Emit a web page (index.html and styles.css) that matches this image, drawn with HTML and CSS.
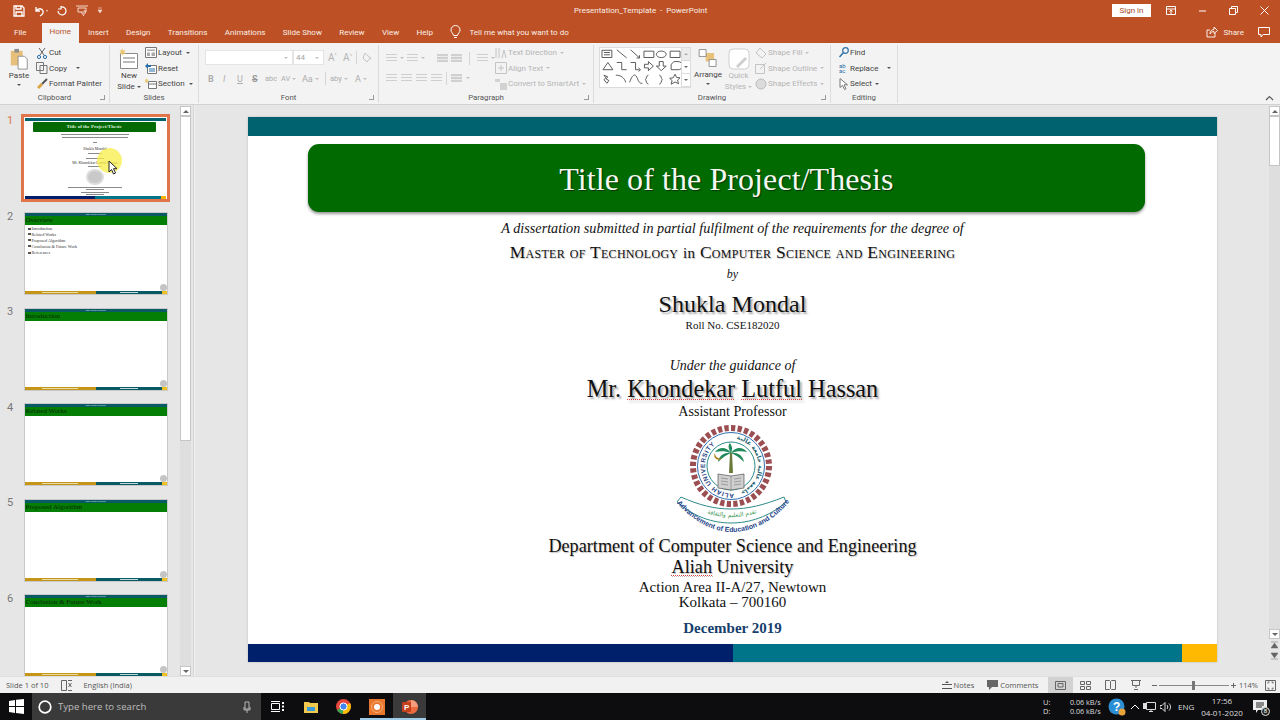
FILE: index.html
```html
<!DOCTYPE html>
<html lang="en">
<head>
  <meta charset="UTF-8">
  <title>Presentation_Template - PowerPoint</title>
  <link rel="stylesheet" href="styles.css">
</head>
<body>
  <div class="app">
    <!-- title bar -->
    <header class="titlebar">
      <div class="qat">
        <svg width="12" height="12" viewBox="0 0 12 12"><path d="M1 1h8l2 2v8H1z M3 1v3h5V1 M3 11V7h6v4" fill="none" stroke="#fff" stroke-width="1.3"/></svg>
        <svg width="14" height="12" viewBox="0 0 14 12"><path d="M2 2v4h4 M2 6c2-3 6-3 7 0 .5 2-1 4-3 5" fill="none" stroke="#fff" stroke-width="1.3"/><path d="M12 5h2l-1 2z" fill="#f3d9cc"/></svg>
        <svg width="10" height="10" viewBox="0 0 10 10"><path d="M1 5a4 4 0 1 0 3-4 M4 0v3H1" fill="none" stroke="#fff" stroke-width="1.2"/></svg>
        <svg width="12" height="12" viewBox="0 0 12 12"><path d="M0 1h12M2 3h8v4H2z M5 7l3 4M8 5a2 2 0 1 1-1 4" fill="none" stroke="#f3d9cc" stroke-width="1"/></svg>
        <svg width="6" height="7" viewBox="0 0 6 7"><path d="M1 1h4M1 3h4L3 6z" fill="#f3d9cc" stroke="#f3d9cc" stroke-width=".6"/></svg>
      </div>
      <div class="doc-title">Presentation_Template &nbsp;-&nbsp; PowerPoint</div>
      <div class="win-controls">
        <button class="signin">Sign in</button>
        <svg class="wc wc-ribbon" width="10" height="9" viewBox="0 0 10 9"><path d="M.5.5h9v8h-9z M.5 3h9 M5 4v4 M3.5 5.5 5 4l1.5 1.5" fill="none" stroke="#fff"/></svg>
        <svg class="wc" width="9" height="9" viewBox="0 0 9 9"><path d="M1 5h7" stroke="#fff"/></svg>
        <svg class="wc" width="9" height="9" viewBox="0 0 9 9"><path d="M.5 2.5h6v6h-6z M2.5 2.5v-2h6v6h-2" fill="none" stroke="#fff"/></svg>
        <svg class="wc" width="9" height="9" viewBox="0 0 9 9"><path d="M.5.5l8 8M8.5.5l-8 8" stroke="#fff"/></svg>
      </div>
    </header>

    <!-- tabs -->
    <nav class="tabbar">
      <span class="tab">File</span>
      <span class="tab active">Home</span>
      <span class="tab">Insert</span>
      <span class="tab">Design</span>
      <span class="tab">Transitions</span>
      <span class="tab">Animations</span>
      <span class="tab">Slide Show</span>
      <span class="tab">Review</span>
      <span class="tab">View</span>
      <span class="tab">Help</span>
      <span class="tell">
        <svg width="11" height="14" viewBox="0 0 11 14"><path d="M3.5 10.5C3 8 1 7.5 1 5a4.500 4.500 0 0 1 9 0c0 2.500-2 3-2.500 5.500z M4 12.500h3" fill="none" stroke="#fff"/></svg>
        Tell me what you want to do
      </span>
      <span class="share">
        <svg width="12" height="12" viewBox="0 0 12 12"><path d="M9 7v4H1V4h3 M4 8c0-3 2-4.500 4-4.500V1l3.500 3.500L8 7.500V5.500C6 5.500 5 6.500 4 8z" fill="none" stroke="#fff" stroke-width=".9"/></svg>
        Share
      </span>
      <svg class="comment-ic" width="12" height="11" viewBox="0 0 12 11"><path d="M.5.5h11v7H5l-2 2.500V7.500H.5z" fill="none" stroke="#fff"/></svg>
    </nav>

    <!-- ribbon -->
    <section class="ribbon">
      <div class="group g-clip">
        <div class="group-body">
          <div class="big-btn paste">
            <svg width="20" height="22" viewBox="0 0 20 24"><path d="M1 3h13v16H1z" fill="#e6c07b"/><path d="M5 1h5v4H5z" fill="#8d8d8d"/><path d="M9 9h7l3 3v11H9z" fill="#fff" stroke="#8d8d8d"/></svg>
            <span>Paste</span>
            <i class="caret"></i>
          </div>
          <div class="rows">
            <div class="rrow"><svg width="12" height="12" viewBox="0 0 12 12"><path d="M3 1l5 7M9 1L4 8" stroke="#666" fill="none"/><circle cx="3" cy="10" r="1.6" fill="none" stroke="#2b6ea6"/><circle cx="9" cy="10" r="1.6" fill="none" stroke="#2b6ea6"/></svg>Cut</div>
            <div class="rrow"><svg width="12" height="12" viewBox="0 0 12 12"><path d="M.5.5h7v8h-7z M4 3.5h7v8H4z" fill="#f4f4f4" stroke="#777"/></svg>Copy<i class="caret gap"></i></div>
            <div class="rrow"><svg width="12" height="12" viewBox="0 0 12 12"><path d="M6 6l5-5" stroke="#555" stroke-width="2"/><path d="M1 9l4-4 2 2-4 4z" fill="#d9a441"/></svg>Format Painter</div>
          </div>
        </div>
        <div class="group-label">Clipboard<i class="launcher"></i></div>
      </div>

      <div class="group g-slides">
        <div class="group-body">
          <div class="big-btn newslide">
            <svg width="20" height="22" viewBox="0 0 20 22"><path d="M1.5 5.5h17v15h-17z" fill="#fff" stroke="#8a8a8a"/><path d="M4 10h12M4 14h12" stroke="#bbb" stroke-width="2"/><path d="M3 0l1 2.500L6.500 2 5 4l2 1.500-2.500.2L4 8 3 5.800.5 6 2 4 .5 2l2 .5z" fill="#e9c46a"/></svg>
            <span>New</span>
            <span>Slide <i class="caret inl"></i></span>
          </div>
          <div class="rows">
            <div class="rrow"><svg width="12" height="11" viewBox="0 0 12 11"><path d="M.5.5h11v10H.5z" fill="#fff" stroke="#777"/><path d="M2 2.500h8v1.500H2zM2 5.500h3v3.500H2zM6.500 5.500H10v3.500H6.500z" fill="#aaa"/></svg>Layout<i class="caret gap2"></i></div>
            <div class="rrow"><svg width="12" height="11" viewBox="0 0 12 11"><path d="M2.500 2.500h9v8h-9z" fill="#fff" stroke="#777"/><path d="M0 3l3-3v2h3v2H3v2z" fill="#2b6ea6"/><path d="M4 6h6M4 8h6" stroke="#2b6ea6"/></svg>Reset</div>
            <div class="rrow"><svg width="12" height="11" viewBox="0 0 12 11"><path d="M3.500 3.500h8v7h-8z M3.500 6h8" fill="#fff" stroke="#777"/><path d="M1 0l.7 1.500L3 1 2.500 2.500 4 3l-1.500.5L3 5 1.700 4.300 1 5.500.5 4 0 3l.5-1z" fill="#e9c46a"/></svg>Section<i class="caret gap2"></i></div>
          </div>
        </div>
        <div class="group-label">Slides</div>
      </div>

      <div class="group g-font">
        <div class="group-body column">
          <div class="font-top">
            <div class="font-box"><i class="caret pale"></i></div>
            <div class="size-box">44<i class="caret pale"></i></div>
            <span class="dim-ic">A<sup>^</sup></span>
            <span class="dim-ic">A<sup>˅</sup></span>
            <span class="vsep"></span>
            <svg width="11" height="11" viewBox="0 0 11 11"><path d="M3 1l5 5-3 4-4-4z" fill="none" stroke="#c4c4c4"/><path d="M6 3l4 3-2 2z" fill="#d6d6d6"/></svg>
          </div>
          <div class="font-bottom">
            <b>B</b><em>I</em><u>U</u><s>S</s><span class="sm">abc</span><span class="sm">AV<i class="caret pale"></i></span><span>Aa<i class="caret pale"></i></span><span class="vsep"></span><span class="sm">aby<i class="caret pale"></i></span><span>A<i class="caret pale"></i></span>
          </div>
        </div>
        <div class="group-label">Font<i class="launcher"></i></div>
      </div>

      <div class="group g-para">
        <div class="group-body para-body">
          <div class="para-icons">
            <div class="pi-row first">
              <i class="pi"></i><i class="caret pale"></i><i class="pi"></i><i class="caret pale"></i><i class="pi short push"></i><i class="pi short"></i><span class="vsep"></span><i class="pi"></i><i class="caret pale"></i>
            </div>
            <div class="pi-row second">
              <i class="pi"></i><i class="pi"></i><i class="pi"></i><i class="pi"></i><span class="vsep"></span><i class="pi short"></i><i class="caret pale"></i>
            </div>
          </div>
          <div class="rows pale-rows">
            <div class="rrow"><svg width="12" height="12" viewBox="0 0 12 12"><path d="M1 1v10M4 1v10M7 11l2-8 2 8" fill="none" stroke="#c4c4c4"/></svg>Text Direction<i class="caret pale"></i></div>
            <div class="rrow"><svg width="12" height="12" viewBox="0 0 12 12"><path d="M.5.5h11v11H.5z M3 6h6M6 3v6" fill="none" stroke="#c4c4c4"/></svg>Align Text<i class="caret pale"></i></div>
            <div class="rrow"><svg width="12" height="12" viewBox="0 0 12 12"><path d="M0 1h5v3H0z M5 5h7v7H5z" fill="#d2d2d2"/></svg>Convert to SmartArt<i class="caret pale"></i></div>
          </div>
        </div>
        <div class="group-label">Paragraph<i class="launcher"></i></div>
      </div>

      <div class="group g-draw">
        <div class="group-body">
          <div class="shapes">
            <div class="shape-grid">
              <svg width="82" height="38" viewBox="0 0 83 42" preserveAspectRatio="none" fill="none" stroke="#555">
                <path d="M2 2.500h10v8H2z M4 5h6M4 7.500h6"/>
                <path d="M17 2l10 9"/>
                <path d="M31 2l9 9M40 8v3h-3"/>
                <path d="M44.500 3.500h10v7h-10z"/>
                <ellipse cx="62" cy="7" rx="5" ry="3.600"/>
                <path d="M71 3.500h10v7H71z"/>
                <path d="M3 24l5-8 5 8z"/>
                <path d="M17 16h5v8h5"/>
                <path d="M31 16h5v8h4M39 22l2 2-2 2"/>
                <path d="M45 18h4v-3l5 5-5 5v-3h-4z"/>
                <path d="M60 15h4v5h3l-5 5-5-5h3z"/>
                <path d="M72 24v-6l3-3h4a4 4 0 0 1 0 9z"/>
                <path d="M4 30l4 2-2 2 3 2-2 3-3-4 2-2z"/>
                <path d="M16 30c5 0 9 3 10 8"/>
                <path d="M30 38c3-10 6-10 8-4s4 5 5 5"/>
                <path d="M49 30c-2 0-2 4-3 5 1 1 1 5 3 5"/>
                <path d="M60 30c2 0 2 4 3 5-1 1-1 5-3 5"/>
                <path d="M76 29l1.500 3.500 3.500.5-2.500 2.500 1 4L76 37.500 72 40l1-4-2.500-2.500 3.500-.5z"/>
              </svg>
            </div>
            <div class="shape-scroll"><i class="s-up"></i><i class="s-down"></i><i class="s-more"></i></div>
          </div>
          <div class="big-btn arrange">
            <svg width="20" height="20" viewBox="0 0 26 25"><path d="M10 6h11v11H10z" fill="#e8c27a"/><path d="M1.500 1.500h9v9h-9z M14.500 14.500h9v9h-9z" fill="#fff" stroke="#777"/></svg>
            <span>Arrange</span>
            <i class="caret"></i>
          </div>
          <div class="big-btn quick">
            <svg width="22" height="22" viewBox="0 0 22 22"><rect x="1" y="1" width="20" height="20" rx="4" fill="#fff" stroke="#cfcfcf"/><path d="M9 19l9-9" stroke="#cfcfcf" stroke-width="3"/></svg>
            <span>Quick</span>
            <span>Styles <i class="caret inl pale"></i></span>
          </div>
          <div class="rows pale-rows shape-fmt">
            <div class="rrow"><svg width="12" height="12" viewBox="0 0 12 12"><path d="M5 1l6 6-4 4-6-5z" fill="none" stroke="#c4c4c4"/></svg>Shape Fill<i class="caret pale"></i></div>
            <div class="rrow"><svg width="12" height="12" viewBox="0 0 12 12"><path d="M.5 2.500h9v9h-9z" fill="none" stroke="#c4c4c4"/><path d="M5 7l6-6" stroke="#c4c4c4"/></svg>Shape Outline<i class="caret pale"></i></div>
            <div class="rrow"><svg width="12" height="12" viewBox="0 0 12 12"><circle cx="6" cy="6" r="5" fill="#dcdcdc" stroke="#bbb"/></svg>Shape Effects<i class="caret pale"></i></div>
          </div>
        </div>
        <div class="group-label">Drawing<i class="launcher"></i></div>
      </div>

      <div class="group g-edit">
        <div class="group-body">
          <div class="rows">
            <div class="rrow"><svg width="10" height="11" viewBox="0 0 10 11"><circle cx="6.500" cy="3.500" r="2.800" fill="none" stroke="#2b6ea6" stroke-width="1.200"/><path d="M4.500 5.500L.5 10" stroke="#2b6ea6" stroke-width="1.500"/></svg>Find</div>
            <div class="rrow"><span class="ab-ic">ab<br>ac</span>Replace<i class="caret gap"></i></div>
            <div class="rrow"><svg width="10" height="12" viewBox="0 0 10 12"><path d="M1 .5v9l2.500-2 2 4 1.500-.7-2-4h3.500z" fill="#fff" stroke="#777"/></svg>Select<i class="caret"></i></div>
          </div>
        </div>
        <div class="group-label">Editing</div>
      </div>

      <svg class="collapse" width="9" height="6" viewBox="0 0 9 6"><path d="M1 5l3.500-3.500L8 5" fill="none" stroke="#555" stroke-width="1.200"/></svg>
    </section>

    <!-- main area -->
    <main class="workspace">
      <aside class="thumbs">
        <div class="thumb-list">
          <div class="thumb-row">
            <span class="num cur">1</span>
            <div class="thumb selected">
              <div class="t1-top"></div>
              <div class="t1-title">Title of the Project/Thesis</div>
              <div class="t1-lines">
                <i class="w70"></i><i class="w66"></i>
                <i class="w6 by-gap"></i>
                <span class="tiny-name">Shukla Mondal</span>
                <i class="w14"></i>
                <i class="w20 gap-t"></i>
                <span class="tiny-name2">Mr. Khondekar Lutful Hassan</span>
                <i class="w14"></i>
                <span class="t1-logo"></span>
                <i class="w56"></i><i class="w20"></i><i class="w30"></i><i class="w20"></i>
                <i class="w14 gap-d"></i>
              </div>
              <div class="t1-bottom"><i></i><b></b><u></u></div>
              <span class="pointer-glow"></span>
              <svg class="pointer" width="11" height="15" viewBox="0 0 11 15"><path d="M1 1v11l2.500-2.500 2 4.500 2-1-2-4.300h3.500z" fill="#fff" stroke="#222"/></svg>
            </div>
          </div>
          <div class="thumb-row">
            <span class="num">2</span>
            <div class="thumb plain">
              <div class="t-top">Title of the Project</div>
              <div class="t-head">Overview</div>
              <ul class="t-list">
                <li>Introduction</li><li>Related Works</li><li>Proposed Algorithm</li><li>Conclusion &amp; Future Work</li><li class="last">References</li>
              </ul>
              <span class="t-logo"></span>
              <div class="t-bottom"><i></i><b></b><u></u></div>
            </div>
          </div>
          <div class="thumb-row">
            <span class="num">3</span>
            <div class="thumb plain">
              <div class="t-top">Title of the Project</div>
              <div class="t-head">Introduction</div>
              <span class="t-logo"></span>
              <div class="t-bottom"><i></i><b></b><u></u></div>
            </div>
          </div>
          <div class="thumb-row">
            <span class="num">4</span>
            <div class="thumb plain">
              <div class="t-top">Title of the Project</div>
              <div class="t-head">Related Works</div>
              <span class="t-logo"></span>
              <div class="t-bottom"><i></i><b></b><u></u></div>
            </div>
          </div>
          <div class="thumb-row">
            <span class="num">5</span>
            <div class="thumb plain">
              <div class="t-top">Title of the Project</div>
              <div class="t-head">Proposed Algorithm</div>
              <span class="t-logo"></span>
              <div class="t-bottom"><i></i><b></b><u></u></div>
            </div>
          </div>
          <div class="thumb-row">
            <span class="num">6</span>
            <div class="thumb plain">
              <div class="t-top">Title of the Project</div>
              <div class="t-head">Conclusion &amp; Future Work</div>
              <span class="t-logo"></span>
              <div class="t-bottom"><i></i><b></b><u></u></div>
            </div>
          </div>
        </div>
        <div class="vscroll thumb-scroll">
          <span class="sb-btn"><i class="up"></i></span>
          <div class="sb-track"><span class="sb-thumb"></span></div>
          <span class="sb-btn"><i class="down"></i></span>
        </div>
      </aside>

      <div class="stage">
        <article class="slide">
          <div class="slide-top"></div>
          <h1 class="slide-title">Title of the Project/Thesis</h1>
          <div class="slide-body">
            <p class="l-diss">A dissertation submitted in partial fulfilment of the requirements for the degree of</p>
            <p class="l-degree">Master of Technology <span class="lc">in</span> Computer Science and Engineering</p>
            <p class="l-by">by</p>
            <p class="l-name">Shukla Mondal</p>
            <p class="l-roll">Roll No. CSE182020</p>
            <p class="l-under">Under the guidance of</p>
            <p class="l-guide">Mr. <span class="squig">Khondekar</span> <span class="squig">Lutful</span> Hassan</p>
            <p class="l-asst">Assistant Professor</p>
            <svg class="logo" width="118" height="115" viewBox="0 0 118 115">
              <circle cx="57" cy="45" r="38" fill="none" stroke="#9c4f52" stroke-width="6" pathLength="360" stroke-dasharray="6.5 3.5"/>
              <circle cx="57" cy="45" r="33.500" fill="#fff" stroke="#2e6fb0" stroke-width="1"/>
              <circle cx="57" cy="45" r="24" fill="#fff" stroke="#2e8a8a" stroke-width="1"/>
              <path d="M56 32l-1 20h4l-1-20z" fill="#6b7a3a"/>
              <path d="M57 32c-5-7-12-6-16-1 5-1 11-1 16 1zM57 32c5-7 12-6 16-1-5-1-11-1-16 1zM57 32c-7-1-12 3-13 9 4-4 8-7 13-9zM57 32c7-1 12 3 13 9-4-4-8-7-13-9zM57 32c-3-5-3-8-1-10 2 3 3 6 1 10z" fill="#1f8a5a"/>
              <path d="M44 53l13 2 13-2v14l-13 2-13-2z" fill="#cfcfcf" stroke="#555" stroke-width=".7"/>
              <path d="M57 55v14M47 57l7 1M47 60l7 1M47 63l7 1M60 58l7-1M60 61l7-1M60 64l7-1" stroke="#666" stroke-width=".5"/>
              <path d="M41 32a5 5 0 0 0 7 5 4 4 0 0 1-7-5z" fill="#b5851f"/>
              <path id="capLeft" d="M60 72.500A27.500 27.500 0 0 1 57 17.500" fill="none"/>
              <path id="capRight" d="M58 17.500A27.500 27.500 0 0 1 62 72" fill="none"/>
              <text class="logo-arc"><textPath href="#capLeft">ALIAH UNIVERSITY</textPath></text>
              <text class="logo-urdu"><textPath href="#capRight" startOffset="50%" text-anchor="middle">جامعة عالية جامعة عالية</textPath></text>
              <path d="M7 76C25 84 40 88 57 88S90 84 110 76l2 5C95 96 75 102 57 102S20 96 3 81z" fill="#fff" stroke="#2e8a8a"/>
              <path id="ribbonLine" d="M8 80C25 91 40 96 57 96S90 91 108 80" fill="none"/>
              <text class="logo-ribbon"><textPath href="#ribbonLine" startOffset="50%" text-anchor="middle">تقدم التعليم والثقافة</textPath></text>
              <path id="motto" d="M0 79C20 102 40 111 58 111S100 102 118 77" fill="none"/>
              <text class="logo-motto"><textPath href="#motto" startOffset="50%" text-anchor="middle">Advancement of Education and Culture</textPath></text>
            </svg>
            <p class="l-dept">Department of Computer Science and Engineering</p>
            <p class="l-uni"><span class="squig">Aliah</span> University</p>
            <p class="l-addr addr-first">Action Area II-A/27, Newtown</p>
            <p class="l-addr">Kolkata – 700160</p>
            <p class="l-date">December 2019</p>
          </div>
          <div class="slide-bottom"><i></i><b></b><u></u></div>
        </article>
        <div class="vscroll main-scroll">
          <span class="sb-btn"><i class="up"></i></span>
          <div class="sb-track"><span class="sb-thumb"></span></div>
          <span class="sb-btn"><i class="down"></i></span>
          <span class="sb-nav"><svg width="7" height="8" viewBox="0 0 7 8"><path d="M0 1h7M3.500 2L0 7h7z" fill="#666" stroke="#666" stroke-width=".5"/></svg></span>
          <span class="sb-nav"><svg width="7" height="8" viewBox="0 0 7 8"><path d="M0 7h7M3.500 6L0 1h7z" fill="#666" stroke="#666" stroke-width=".5"/></svg></span>
        </div>
      </div>
    </main>

    <!-- status bar -->
    <footer class="statusbar">
      <span class="st-left">Slide 1 of 10</span>
      <svg class="st-spell" width="12" height="11" viewBox="0 0 12 11"><path d="M5.500.5H.5v10h5 M5.500.5v10" fill="none" stroke="#666"/><path d="M7.500 3l3 4M10.500 3l-3 4" stroke="#666"/><path d="M7 .5h4M7 10.500h4" stroke="#666"/></svg>
      <span class="st-lang">English (India)</span>
      <div class="st-right">
        <span class="st-item"><svg width="10" height="8" viewBox="0 0 10 8"><path d="M0 3.500h10M0 7.500h10" stroke="#555"/><path d="M3 2l2-2 2 2z" fill="#555"/></svg>Notes</span>
        <span class="st-item comments"><svg width="11" height="10" viewBox="0 0 11 10"><path d="M0 0h11v7H5L2 10V7H0z" fill="#666"/></svg>Comments</span>
        <span class="view on"><svg width="11" height="9" viewBox="0 0 11 9"><path d="M.5.5h10v8H.5z M3 2.500h5v3.500H3z" fill="none" stroke="#666"/></svg></span>
        <span class="view"><svg width="11" height="9" viewBox="0 0 11 9"><path d="M.5.5h4v3h-4z M6.500.5h4v3h-4z M.5 5.500h4v3h-4z M6.500 5.500h4v3h-4z" fill="none" stroke="#666"/></svg></span>
        <span class="view"><svg width="11" height="10" viewBox="0 0 11 10"><path d="M.5.5h4l1 1 1-1h4v9h-4l-1-1-1 1h-4z M5.500 1.500v7" fill="none" stroke="#666"/></svg></span>
        <span class="view"><svg width="10" height="10" viewBox="0 0 10 10"><path d="M0 .5h10M1.500.5v5h7v-5M5 5.500V8M3 9.500h4" fill="none" stroke="#666"/></svg></span>
        <div class="zoom">
          <i class="z-minus"></i>
          <div class="z-track"><span class="z-knob"></span></div>
          <i class="z-plus"></i>
        </div>
        <span class="z-pct">114%</span>
        <svg width="11" height="11" viewBox="0 0 11 11"><path d="M.5.5h10v10H.5z M3 3.500V2h1.500 M8 3.500V2H6.500 M3 7.500V9h1.500 M8 7.500V9H6.500" fill="none" stroke="#666"/></svg>
      </div>
    </footer>

    <!-- taskbar -->
    <footer class="taskbar">
      <span class="start"><svg width="15" height="15" viewBox="0 0 15 15"><path d="M0 2l6-1v6H0zM7 .8L15 0v7H7zM0 8h6v6l-6-1zM7 8h8v7l-8-1z" fill="#fff"/></svg></span>
      <div class="search">
        <svg class="cortana" width="14" height="14" viewBox="0 0 14 14"><circle cx="7" cy="7" r="5.800" fill="none" stroke="#fff" stroke-width="1.700"/></svg>
        <span class="search-text">Type here to search</span>
        <svg class="mic" width="8" height="12" viewBox="0 0 8 12"><path d="M2 1h4v7H2z M1 6v3h6V6 M4 9v3" fill="none" stroke="#b5b5b5"/></svg>
      </div>
      <span class="tb-ic"><svg width="13" height="11" viewBox="0 0 13 11"><path d="M.5 2.500h8v6h-8z M0 .5h9M0 10.500h9" fill="none" stroke="#fff"/><path d="M11 1h2v2h-2zM11 4.500h2v2h-2zM11 8h2v2h-2z" fill="#fff"/></svg></span>
      <span class="tb-ic"><svg width="14" height="12" viewBox="0 0 14 12"><path d="M0 1h5l1 1h8v10H0z" fill="#f2c94c"/><path d="M3 6h8v4H3z" fill="#3a9bd9"/></svg></span>
      <span class="tb-ic"><svg width="15" height="15" viewBox="0 0 15 15"><circle cx="7.500" cy="7.500" r="7.500" fill="#e8453c"/><path d="M7.500 7.500L1 11a7.500 7.500 0 0 0 6 4z" fill="#34a853"/><path d="M7.500 7.500L7 15a7.500 7.500 0 0 0 8-7.500 7 7 0 0 0-1-3.500z" fill="#fbbc05"/><circle cx="7.500" cy="7.500" r="3.600" fill="#4285f4" stroke="#fff"/></svg></span>
      <span class="tb-ic running"><svg width="16" height="16" viewBox="0 0 16 16"><rect width="16" height="16" fill="#e8762c"/><circle cx="8" cy="8" r="3" fill="#fff"/><circle cx="8" cy="8" r="5.500" fill="none" stroke="#f5b07a"/></svg></span>
      <span class="tb-ic running active"><svg width="16" height="14" viewBox="0 0 16 14"><circle cx="9" cy="7" r="7" fill="#ec6a3f"/><path d="M9 0a7 7 0 0 1 7 7H9z" fill="#f59c7a"/><rect y="2" width="9" height="10" rx="1" fill="#c2401c"/><text x="2" y="10" class="p-mark">P</text></svg></span>
      <div class="tray">
        <div class="net"><span>U:</span><span>D:</span></div>
        <div class="net speed"><span>0.06 kB/s</span><span>0.06 kB/s</span></div>
        <svg class="t-help" width="18" height="18" viewBox="0 0 18 18"><circle cx="8.500" cy="8.500" r="8" fill="#2c8fd6"/><text x="5" y="13" class="help-mark">?</text><circle cx="14" cy="14" r="3.500" fill="#e8a33a"/></svg>
        <svg class="t-caret" width="10" height="6" viewBox="0 0 10 6"><path d="M1 5l4-4 4 4" fill="none" stroke="#fff"/></svg>
        <svg class="t-mon" width="13" height="12" viewBox="0 0 13 12"><path d="M3.500 1.500h9v7h-9z M8 8.500v2M6 10.500h4" fill="none" stroke="#ddd"/><path d="M0 2h3v6H0z" fill="#ddd"/></svg>
        <svg class="t-vol" width="13" height="10" viewBox="0 0 13 10"><path d="M0 3.500h2l3-3v9l-3-3H0z" fill="none" stroke="#ddd"/><path d="M7 3c1 1 1 3 0 4M9 1.500c2 2 2 5 0 7" fill="none" stroke="#ddd"/></svg>
        <span class="eng">ENG</span>
        <div class="clock"><span>17:56</span><span>04-01-2020</span></div>
        <span class="notify">
          <svg width="14" height="13" viewBox="0 0 14 13"><path d="M0 0h14v10H5l-2 3v-3H0z" fill="#eee"/><path d="M3 3h8M3 5h8M3 7h6" stroke="#222"/></svg>
          <i>8</i>
        </span>
      </div>
    </footer>
  </div>
</body>
</html>
```

FILE: styles.css
```css
* {
  box-sizing: border-box;
}

html, body {
  margin: 0;
  padding: 0;
  width: 1280px;
  height: 720px;
  overflow: hidden;
}

body {
  font-family: Roboto, "Open Sans", sans-serif;
  font-size: 8px;
  color: #444;
  background: #e6e6e6;
}

p {
  margin: 0;
}

.app {
  display: flex;
  flex-direction: column;
  height: 720px;
}

/* title bar */
.titlebar {
  height: 21px;
  flex: none;
  display: flex;
  align-items: center;
  background: #bd5125;
  color: #f6e6dc;
  padding: 0 0 0 13px;
}

.qat {
  display: flex;
  align-items: center;
  gap: 9px;
  width: 561px;
}

.doc-title {
  width: 132px;
  text-align: center;
  white-space: nowrap;
  font-size: 8px;
  color: #fbeee6;
}

.win-controls {
  margin-left: auto;
  display: flex;
  align-items: center;
  padding-right: 11px;
}

.signin {
  width: 39px;
  height: 13px;
  border: 0;
  padding: 0;
  background: #fff;
  color: #a64c28;
  font: 8px Roboto, sans-serif;
  margin-right: 15px;
}

.wc {
  margin-left: 22px;
}

.wc-ribbon {
  margin-left: 0;
}

/* tabs */
.tabbar {
  height: 22px;
  flex: none;
  display: flex;
  align-items: center;
  background: #bd5125;
  color: #fbeee6;
  font-size: 8px;
  padding-left: 14px;
}

.tab {
  margin-right: 17.4px;
  white-space: nowrap;
}

.tab.active {
  align-self: flex-end;
  height: 20px;
  padding: 4px 8px 0;
  margin: 0 9px 0 0;
  background: #f3f3f3;
  color: #b5532d;
}

.tab:first-child {
  margin-right: 15px;
}

.tell {
  display: flex;
  align-items: center;
  gap: 8px;
}

.share {
  margin-left: auto;
  display: flex;
  align-items: center;
  gap: 6px;
}

.comment-ic {
  margin: 0 10px 0 14px;
}

/* ribbon */
.ribbon {
  height: 62px;
  flex: none;
  position: relative;
  display: flex;
  background: #f3f3f3;
  border-bottom: 1px solid #d2d2d2;
  padding-top: 2px;
  color: #444;
}

.group {
  display: flex;
  flex-direction: column;
  border-right: 1px solid #dcdcdc;
  margin-bottom: 1px;
  flex: none;
}

.group-body {
  flex: 1;
  display: flex;
  min-height: 0;
}

.group-body.column {
  flex-direction: column;
}

.group-label {
  height: 11px;
  line-height: 11px;
  text-align: center;
  font-size: 7.8px;
  color: #555;
  position: relative;
}

.launcher {
  position: absolute;
  right: 4px;
  top: 3px;
  width: 5px;
  height: 5px;
  border-right: 1px solid #999;
  border-bottom: 1px solid #999;
}

.g-clip { width: 110px; }
.g-slides { width: 89px; }
.g-font { width: 180px; }
.g-para { width: 215px; }
.g-draw { width: 237px; }
.g-edit { width: 67px; }

.big-btn {
  display: flex;
  flex-direction: column;
  align-items: center;
  flex: none;
  line-height: 11px;
  white-space: nowrap;
  padding-top: 3px;
}

.big-btn span {
  display: block;
}

.paste {
  width: 36px;
  padding-left: 2px;
}

.newslide {
  width: 35px;
  padding-left: 3px;
}

.rows {
  display: flex;
  flex-direction: column;
  flex: none;
}

.rrow {
  height: 15.5px;
  display: flex;
  align-items: center;
  gap: 1px;
  white-space: nowrap;
}

.rrow svg {
  flex: none;
}

.pale-rows .rrow {
  color: #b5b5b5;
}

.caret {
  display: inline-block;
  width: 0;
  height: 0;
  margin-left: 2px;
  border-left: 2px solid transparent;
  border-right: 2px solid transparent;
  border-top: 2px solid #555;
  vertical-align: middle;
}

.caret.pale {
  border-top-color: #c0c0c0;
}

.caret.gap {
  margin-left: 8px;
}

.caret.gap2 {
  margin-left: 3px;
}

.caret.inl {
  margin-left: 0;
}

.big-btn > .caret {
  margin: 3px 0 0;
}

/* font group */
.font-top {
  display: flex;
  align-items: center;
  height: 20px;
  padding: 5px 0 0 6px;
  color: #aaa;
}

.font-box {
  width: 88px;
  height: 15px;
  background: #fff;
  border: 1px solid #e4e4e4;
  display: flex;
  align-items: center;
  justify-content: flex-end;
  padding-right: 4px;
}

.size-box {
  width: 31px;
  height: 15px;
  background: #fff;
  border: 1px solid #e4e4e4;
  display: flex;
  align-items: center;
  justify-content: space-between;
  padding: 0 4px 0 2px;
  margin-right: 4px;
  color: #a5a5a5;
}

.dim-ic {
  font-size: 10px;
  color: #b5b5b5;
  width: 15px;
}

.dim-ic sup {
  font-size: 5px;
}

.vsep {
  display: block;
  width: 1px;
  height: 13px;
  background: #d5d5d5;
  flex: none;
}

.font-top .vsep {
  margin: 0 5px 0 -2px;
}

.font-bottom {
  display: grid;
  grid-template-columns: 15px 14px 15px 13px 16px 21px 23px 5px 25px 20px;
  align-items: center;
  padding: 7px 0 0 9px;
  font-size: 9px;
  color: #adadad;
  white-space: nowrap;
}

.font-bottom .sm {
  font-size: 7.5px;
}

.font-bottom s {
  color: #999;
  font-weight: 700;
}

/* paragraph group */
.para-body {
  padding-left: 7px;
  gap: 7px;
}

.para-icons {
  width: 102px;
  flex: none;
}

.pi-row {
  display: flex;
  align-items: center;
  height: 22px;
}

.pi-row.first {
  gap: 3px;
  padding-top: 4px;
}

.pi-row.second {
  gap: 4px;
}

.pi-row .caret {
  margin-left: 0;
}

.pi-row.first .vsep {
  margin: 0 4px;
}

.pi {
  display: block;
  width: 11px;
  height: 8px;
  flex: none;
  background: repeating-linear-gradient(#cfcfcf 0 1px, transparent 1px 3px);
}

.pi.short {
  background: repeating-linear-gradient(#d0d0d0 0 2px, #ebebeb 2px 3px);
}

.pi.push {
  margin-left: 9px;
}

/* drawing group */
.g-draw .group-body {
  padding-left: 5px;
}

.shapes {
  display: flex;
  height: 41px;
  width: 92px;
  margin-top: 2px;
  background: #fff;
  border: 1px solid #dcdcdc;
  flex: none;
}

.shape-grid {
  flex: 1;
  overflow: hidden;
}

.shape-scroll {
  width: 9px;
  flex: none;
  display: flex;
  flex-direction: column;
  border-left: 1px solid #dcdcdc;
}

.shape-scroll i {
  flex: 1;
  display: flex;
  align-items: center;
  justify-content: center;
  border-bottom: 1px solid #dcdcdc;
}

.shape-scroll i::after {
  content: "";
  border-left: 2px solid transparent;
  border-right: 2px solid transparent;
  border-top: 2px solid #666;
}

.shape-scroll .s-up {
  background: #ececec;
}

.shape-scroll .s-up::after {
  border-top: 0;
  border-bottom: 2px solid #aaa;
}

.arrange {
  width: 34px;
}

.arrange span {
  margin-top: 1px;
}

.quick {
  width: 27px;
  color: #b5b5b5;
}

.shape-fmt {
  margin-left: 3px;
}

/* editing group */
.g-edit .group-body {
  padding-left: 8px;
}

.ab-ic {
  display: block;
  width: 10px;
  font-size: 6px;
  line-height: 5px;
  color: #2b6ea6;
}

.collapse {
  position: absolute;
  right: 6px;
  bottom: 3px;
}

/* workspace */
.workspace {
  flex: 1;
  min-height: 0;
  display: flex;
  background: #e6e6e6;
}

.thumbs {
  width: 194px;
  flex: none;
  display: flex;
  border-right: 1px solid #d5d5d5;
  padding-top: 9px;
}

.thumb-list {
  width: 180px;
  flex: none;
  overflow: hidden;
}

.thumb-row {
  display: flex;
  height: 95.5px;
  padding-left: 7px;
}

.num {
  width: 16.5px;
  padding-top: 1px;
  font-size: 11px;
  line-height: 12px;
  color: #777;
  flex: none;
}

.num.cur {
  color: #d9794f;
}

.thumb {
  position: relative;
  flex: none;
  background: #fff;
}

.thumb.selected {
  width: 149px;
  height: 88px;
  margin-left: -3px;
  border: 3px solid #e0754b;
  padding: 1px 0 0 0;
  overflow: hidden;
}

.thumb.plain {
  width: 144px;
  height: 83px;
  border: 1px solid #c9c9c9;
  margin-top: 2.5px;
  overflow: hidden;
}

.t1-top {
  height: 3px;
  margin: 0 1px;
  background: #00616f;
}

.t1-title {
  height: 10px;
  margin: 1px 11px 0 9px;
  background: #046a04;
  border-radius: 1px;
  color: #dff0df;
  font: 700 5px/10px "Liberation Serif", serif;
  text-align: center;
}

.t1-lines {
  display: flex;
  flex-direction: column;
  align-items: center;
  gap: 1.5px;
  padding-top: 2px;
}

.t1-lines i {
  display: block;
  height: 1px;
  background: #8a8a8a;
}

.w70 { width: 48%; }
.w66 { width: 46%; }
.w56 { width: 38%; }
.w30 { width: 20%; }
.w20 { width: 13%; }
.w14 { width: 10%; }
.w6 { width: 3%; }

.by-gap {
  margin-top: 2.5px;
}

.gap-t {
  margin-top: 3px;
}

.gap-d {
  margin-top: 2px;
}

.tiny-name, .tiny-name2 {
  font: 3.8px/4px "Liberation Serif", serif;
  color: #333;
  margin: 3px 0 0;
  white-space: nowrap;
}

.tiny-name2 {
  margin: 0;
}

.t1-logo {
  width: 18px;
  height: 16.5px;
  border-radius: 50%;
  background: #c9c9c9;
  border: 2px solid #dedede;
}

.t1-bottom {
  position: absolute;
  left: 1px;
  right: 1px;
  bottom: 0;
  height: 3px;
  display: flex;
}

.t1-bottom i { width: 50%; background: #011e6a; }
.t1-bottom b { flex: 1; background: #00758a; }
.t1-bottom u { width: 5px; background: #f7b500; }

.pointer-glow {
  position: absolute;
  left: 73px;
  top: 31px;
  width: 25px;
  height: 25px;
  border-radius: 50%;
  background: rgba(247, 238, 70, .75);
}

.pointer {
  position: absolute;
  left: 84px;
  top: 43px;
}

.t-top {
  height: 3px;
  background: #0a5a66;
  color: #cfe6e6;
  font: 2.5px/3px "Liberation Sans", sans-serif;
  text-align: center;
}

.t-head {
  height: 9px;
  background: #047e04;
  color: #062506;
  font: 7px/9px "Liberation Serif", serif;
  padding-left: 1px;
}

.t-list {
  list-style: none;
  margin: 0;
  padding: 1px 0 0 3px;
  font: 4.2px/5.9px "Liberation Serif", serif;
  color: #333;
}

.t-list li::before {
  content: "";
  display: inline-block;
  width: 3px;
  height: 2px;
  background: #555;
  margin-right: 1px;
  vertical-align: 0.5px;
}

.t-list .last {
  margin-top: .5px;
}

.t-logo {
  position: absolute;
  right: 0;
  bottom: 3px;
  width: 7px;
  height: 7px;
  border-radius: 50%;
  background: #c4c4c4;
}

.t-bottom {
  position: absolute;
  left: 0;
  right: 0;
  bottom: 0;
  height: 3px;
  display: flex;
}

.t-bottom i { width: 50%; background: linear-gradient(#e8dcaa, #e8dcaa) center/36px 1px no-repeat, #c59517; }
.t-bottom b { flex: 1; background: linear-gradient(#bfd8dc, #bfd8dc) center/18px 1px no-repeat, #0a5a66; }
.t-bottom u { width: 5px; background: #f0c020; }

/* scrollbars */
.vscroll {
  width: 11px;
  flex: none;
  display: flex;
  flex-direction: column;
}

.sb-track {
  flex: 1;
  min-height: 0;
  background: #dedede;
}

.sb-btn {
  height: 10px;
  flex: none;
  background: #fff;
  border: 1px solid #c6c6c6;
  display: flex;
  align-items: center;
  justify-content: center;
}

.sb-btn i {
  width: 0;
  height: 0;
  border-left: 3px solid transparent;
  border-right: 3px solid transparent;
}

.sb-btn i.up { border-bottom: 3px solid #666; }
.sb-btn i.down { border-top: 3px solid #666; }

.sb-thumb {
  display: block;
  background: #fff;
  border: 1px solid #c6c6c6;
}

.thumb-scroll {
  margin-top: -9px;
  padding-top: 1px;
}

.thumb-scroll .sb-thumb {
  height: 325px;
}

.main-scroll {
  padding-top: 1px;
  padding-bottom: 15px;
}

.main-scroll .sb-thumb {
  height: 50px;
}

.sb-nav {
  height: 11px;
  flex: none;
  display: flex;
  align-items: center;
  justify-content: center;
}

/* stage + slide */
.stage {
  flex: 1;
  display: flex;
  justify-content: space-between;
  padding-left: 53px;
  background: #e6e6e6;
  border-left: 1px solid #f0f0f0;
}

.slide {
  width: 969px;
  height: 545px;
  margin-top: 12px;
  background: #fff;
  display: flex;
  flex-direction: column;
  font-family: "Liberation Serif", serif;
  color: #111;
  text-align: center;
  box-shadow: 0 0 2px rgba(0, 0, 0, .2);
}

.slide-top {
  height: 19px;
  flex: none;
  background: #00616f;
}

.slide-title {
  height: 68px;
  flex: none;
  margin: 8px 72px 0 60px;
  background: #016a01;
  border-radius: 11px;
  box-shadow: 0 2px 3px rgba(0, 0, 0, .4);
  color: #f4f8f0;
  font: 400 32px/70px "Liberation Serif", serif;
  letter-spacing: .08px;
  text-shadow: 1px 1px 1px rgba(0, 0, 0, .5);
}

.slide-body {
  flex: 1;
  min-height: 0;
}

.l-diss {
  font: italic 14.2px/15px "Liberation Serif", serif;
  margin-top: 9px;
}

.l-degree {
  font: 17.45px/18px "Liberation Serif", serif;
  font-variant: small-caps;
  letter-spacing: .3px;
  margin-top: 7px;
  text-shadow: 1px 1px 1px rgba(0, 0, 0, .25);
}

.l-degree .lc {
  font-variant: normal;
  font-size: 15px;
}

.l-by {
  font: italic 12px/14px "Liberation Serif", serif;
  margin-top: 5px;
}

.l-name {
  font: 24.1px/26px "Liberation Serif", serif;
  margin-top: 10px;
  text-shadow: 2px 2px 2px rgba(0, 0, 0, .35);
}

.l-roll {
  font: 11px/13px "Liberation Serif", serif;
  margin-top: 2px;
}

.l-under {
  font: italic 14px/16px "Liberation Serif", serif;
  margin-top: 26px;
}

.l-guide {
  font: 24.3px/26px "Liberation Serif", serif;
  margin-top: 2px;
  text-shadow: 2px 2px 2px rgba(0, 0, 0, .35);
}

.squig {
  text-decoration: underline dotted #e04040 1px;
  text-underline-offset: 2px;
}

.l-asst {
  font: 14.1px/17px "Liberation Serif", serif;
  margin-top: 1px;
}

.logo {
  display: block;
  margin: 1px auto 0;
  overflow: visible;
}

.logo-arc {
  font: 700 6.4px "Liberation Sans", sans-serif;
  fill: #1f3f86;
  letter-spacing: .6px;
}

.logo-urdu {
  font: 700 6px "DejaVu Sans", sans-serif;
  fill: #1d5f70;
}

.logo-ribbon {
  font: 6px "DejaVu Sans", sans-serif;
  fill: #3f9a5a;
}

.logo-motto {
  font: 700 7px "Liberation Sans", sans-serif;
  fill: #24448a;
}

.l-dept {
  font: 18.2px/20px "Liberation Serif", serif;
  text-shadow: 1px 1px 1px rgba(0, 0, 0, .25);
}

.l-uni {
  font: 18.2px/20px "Liberation Serif", serif;
  margin-top: 1px;
  text-shadow: 1px 1px 1px rgba(0, 0, 0, .25);
}

.l-addr {
  font: 15px/15px "Liberation Serif", serif;
}

.addr-first {
  margin-top: 3px;
}

.l-date {
  font: 700 15px/17px "Liberation Serif", serif;
  color: #163f6e;
  margin-top: 10px;
}

.slide-bottom {
  height: 18px;
  flex: none;
  display: flex;
}

.slide-bottom i { width: 50%; background: #00206c; }
.slide-bottom b { flex: 1; background: #00758a; }
.slide-bottom u { width: 35px; background: #ffb900; }

/* status bar */
.statusbar {
  height: 17px;
  flex: none;
  display: flex;
  align-items: center;
  padding-left: 6px;
  background: #f1f1f1;
  border-top: 1px solid #e0e0e0;
  font-family: "Open Sans", sans-serif;
  font-size: 7.5px;
  color: #555;
}

.st-spell {
  margin-left: 13px;
}

.st-lang {
  margin-left: 10px;
}

.st-right {
  margin-left: auto;
  display: flex;
  align-items: center;
  height: 100%;
  padding-right: 4px;
}

.st-item {
  display: flex;
  align-items: center;
  gap: 2px;
}

.comments {
  margin-left: 13px;
  margin-right: 10px;
}

.view {
  width: 25px;
  height: 100%;
  display: flex;
  align-items: center;
  justify-content: center;
}

.view.on {
  background: #d2d2d2;
}

.zoom {
  display: flex;
  align-items: center;
  margin-left: 3.5px;
  gap: 2px;
}

.z-minus {
  width: 5px;
  height: 1px;
  background: #666;
}

.z-plus {
  width: 5px;
  height: 5px;
  background: linear-gradient(#666, #666) center/5px 1px no-repeat, linear-gradient(#666, #666) center/1px 5px no-repeat;
}

.z-track {
  position: relative;
  width: 70px;
  height: 1px;
  background: #888;
}

.z-knob {
  position: absolute;
  left: 33px;
  top: -4px;
  width: 3px;
  height: 9px;
  background: #777;
}

.z-pct {
  margin: 0 7px 0 3px;
}

/* taskbar */
.taskbar {
  height: 27px;
  flex: none;
  display: flex;
  align-items: center;
  background: #0d0d10;
  color: #ddd;
}

.start {
  width: 32px;
  height: 100%;
  display: flex;
  align-items: center;
  justify-content: center;
}

.search {
  width: 229px;
  height: 100%;
  display: flex;
  align-items: center;
  background: #3a3a3a;
  padding-left: 6px;
  color: #bdbdbd;
}

.search-text {
  margin-left: 6px;
  font-family: "Open Sans", sans-serif;
  font-size: 9.6px;
}

.mic {
  margin-left: auto;
  margin-right: 10px;
}

.tb-ic {
  width: 33px;
  height: 100%;
  display: flex;
  align-items: center;
  justify-content: center;
  flex: none;
}

.tb-ic.running {
  box-shadow: inset 0 -2px 0 #9ecbe8;
}

.tb-ic.active {
  background: #3a3a3a;
}

.p-mark {
  font: 700 8px "Liberation Sans", sans-serif;
  fill: #fff;
}

.help-mark {
  font: 700 12px "Liberation Sans", sans-serif;
  fill: #fff;
}

.tray {
  margin-left: auto;
  display: flex;
  align-items: center;
  height: 100%;
  padding-right: 7px;
  font-family: "Open Sans", sans-serif;
  color: #ddd;
}

.net {
  display: flex;
  flex-direction: column;
  width: 8px;
  font-size: 7.5px;
  line-height: 9px;
}

.net.speed {
  width: 30px;
  margin-left: 19px;
  white-space: nowrap;
  font-size: 7.2px;
}

.t-help { margin-left: 8px; }
.t-caret { margin-left: 4px; }
.t-mon { margin-left: 3px; }
.t-vol { margin-left: 4px; }

.eng {
  width: 16px;
  margin-left: 5px;
  font-size: 8px;
}

.clock {
  display: flex;
  flex-direction: column;
  align-items: center;
  width: 40px;
  margin-left: 8px;
  font-size: 8px;
  line-height: 12px;
  white-space: nowrap;
}

.notify {
  position: relative;
  width: 26px;
  height: 100%;
  display: flex;
  align-items: center;
  justify-content: center;
  margin-left: 5px;
}

.notify i {
  position: absolute;
  right: 3px;
  bottom: 4px;
  width: 9px;
  height: 9px;
  border-radius: 50%;
  background: #222;
  border: 1px solid #ddd;
  color: #fff;
  font: 6px/7px "Liberation Sans", sans-serif;
  text-align: center;
}
```
